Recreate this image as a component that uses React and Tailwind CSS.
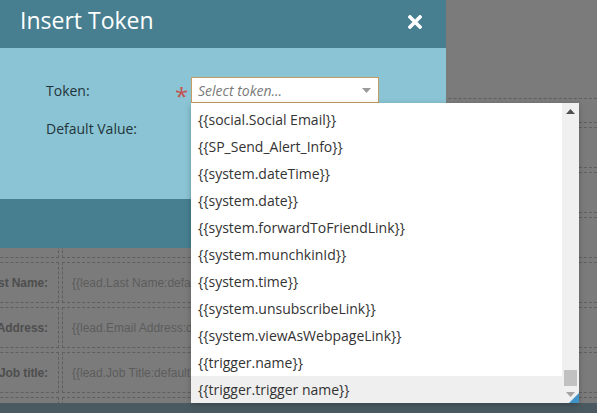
import React from 'react';

const TOKENS = [
  '{{social.Social Email}}',
  '{{SP_Send_Alert_Info}}',
  '{{system.dateTime}}',
  '{{system.date}}',
  '{{system.forwardToFriendLink}}',
  '{{system.munchkinId}}',
  '{{system.time}}',
  '{{system.unsubscribeLink}}',
  '{{system.viewAsWebpageLink}}',
  '{{trigger.name}}',
  '{{trigger.trigger name}}',
];

// Form rows of the email page sitting behind the dialog
const FIELDS = [
  { label: '', value: '', short: true },
  { label: '', value: '' },
  { label: '', value: '' },
  { label: '', value: '' },
  { label: 'Last Name:', value: '{{lead.Last Name:default}}' },
  { label: 'Email Address:', value: '{{lead.Email Address:default}}' },
  { label: 'Job title:', value: '{{lead.Job Title:default}}' },
  { label: '', value: '' },
];

function PageBehind() {
  return (
    <div className="flex-1 overflow-hidden pt-[98px] font-['Liberation_Sans',Arial,sans-serif] text-[12px]">
      <div className="-ml-[30px] -mr-[30px] grid grid-cols-[89px_1fr] gap-x-[3px] gap-y-[4px]">
        {FIELDS.map((f, i) => (
          <React.Fragment key={i}>
            <div
              className={`flex items-center justify-end border border-dashed border-[#5f5f5f] pr-[10px] font-bold tracking-[-0.1px] text-[#4e4e4e] whitespace-nowrap ${
                f.short ? 'h-[25px]' : 'h-[41px]'
              }`}
            >
              {f.label}
            </div>
            <div
              className={`flex items-center border border-dashed border-[#5f5f5f] pl-[9px] text-[#5c5c5c] whitespace-nowrap ${
                f.short ? 'h-[25px]' : 'h-[41px]'
              }`}
            >
              {f.value}
            </div>
          </React.Fragment>
        ))}
      </div>
    </div>
  );
}

function TokenDropdown() {
  return (
    <div className="absolute left-[191px] top-[103px] flex h-[300px] w-[388px] bg-white shadow-[0_2px_6px_rgba(0,0,0,0.25)]">
      <ul className="flex-1 overflow-hidden pt-[3px]">
        {TOKENS.map((t, i) => (
          <li
            key={t}
            className={`flex h-[27px] items-center pl-[7px] text-[14px] text-[#333] whitespace-nowrap ${
              i === TOKENS.length - 1 ? 'bg-[#efefef]' : ''
            }`}
          >
            {t}
          </li>
        ))}
      </ul>
      <div className="relative flex w-[17px] flex-col bg-[#f0f0f0]">
        <div className="flex h-[17px] items-center justify-center">
          <svg width="9" height="5" viewBox="0 0 9 5">
            <polygon points="0,5 4.5,0 9,5" fill="#505050" />
          </svg>
        </div>
        <div className="flex flex-1 flex-col justify-end">
          <div className="mx-[2px] h-[16px] bg-[#c1c1c1]" />
        </div>
        <div className="flex h-[17px] items-center justify-center">
          <svg width="9" height="5" viewBox="0 0 9 5">
            <polygon points="0,0 9,0 4.5,5" fill="#a3a3a3" />
          </svg>
        </div>
        <svg className="absolute bottom-0 right-0" width="10" height="10" viewBox="0 0 10 10">
          <polygon points="10,0 10,10 0,10" fill="#3f93c8" />
        </svg>
      </div>
    </div>
  );
}

function InsertTokenDialog() {
  return (
    <div className="absolute left-0 top-0 w-[446px] font-['Open_Sans',sans-serif]">
      <div className="flex h-[48px] items-center justify-between bg-[#477f91] pl-[20px] pr-[24px]">
        <h1 className="pb-[8px] text-[23px] leading-none text-white">Insert Token</h1>
        <button className="mb-[4px]">
          <svg width="14" height="14" viewBox="0 0 14 14" className="block">
            <path d="M2 2 L12 12 M12 2 L2 12" stroke="#fff" strokeWidth="3.6" strokeLinecap="square" />
          </svg>
        </button>
      </div>

      <div className="h-[151px] bg-[#8bc4d4] pl-[46px] pt-[29px]">
        <div className="grid grid-cols-[126px_19px_188px] gap-y-[12px] text-[14px] text-[#22343a]">
          <div className="flex h-[26px] items-center">Token:</div>
          <div className="flex h-[26px] items-center justify-center">
            <span className="relative top-[6px] text-[24px] leading-none text-[#c4524f]">*</span>
          </div>
          <div className="flex h-[26px] items-center justify-between border border-[#c59d62] bg-white pl-[6px] pr-[7px]">
            <span className="italic text-[#7a7a7a]">Select token...</span>
            <svg width="9" height="5" viewBox="0 0 9 5">
              <polygon points="0,0 9,0 4.5,5" fill="#9a9a9a" />
            </svg>
          </div>

          <div className="flex h-[26px] items-center">Default Value:</div>
          <div />
          <div className="h-[26px] border border-[#9bb] bg-white" />
        </div>
      </div>

      <div className="h-[49px] bg-[#477f91]" />

      <TokenDropdown />
    </div>
  );
}

export default function App() {
  return (
    <div className="relative flex h-[413px] w-[597px] flex-col overflow-hidden bg-[#7b7b7b]">
      <PageBehind />
      <div className="h-[10px] bg-[#4b5a61]" />
      <InsertTokenDialog />
    </div>
  );
}
